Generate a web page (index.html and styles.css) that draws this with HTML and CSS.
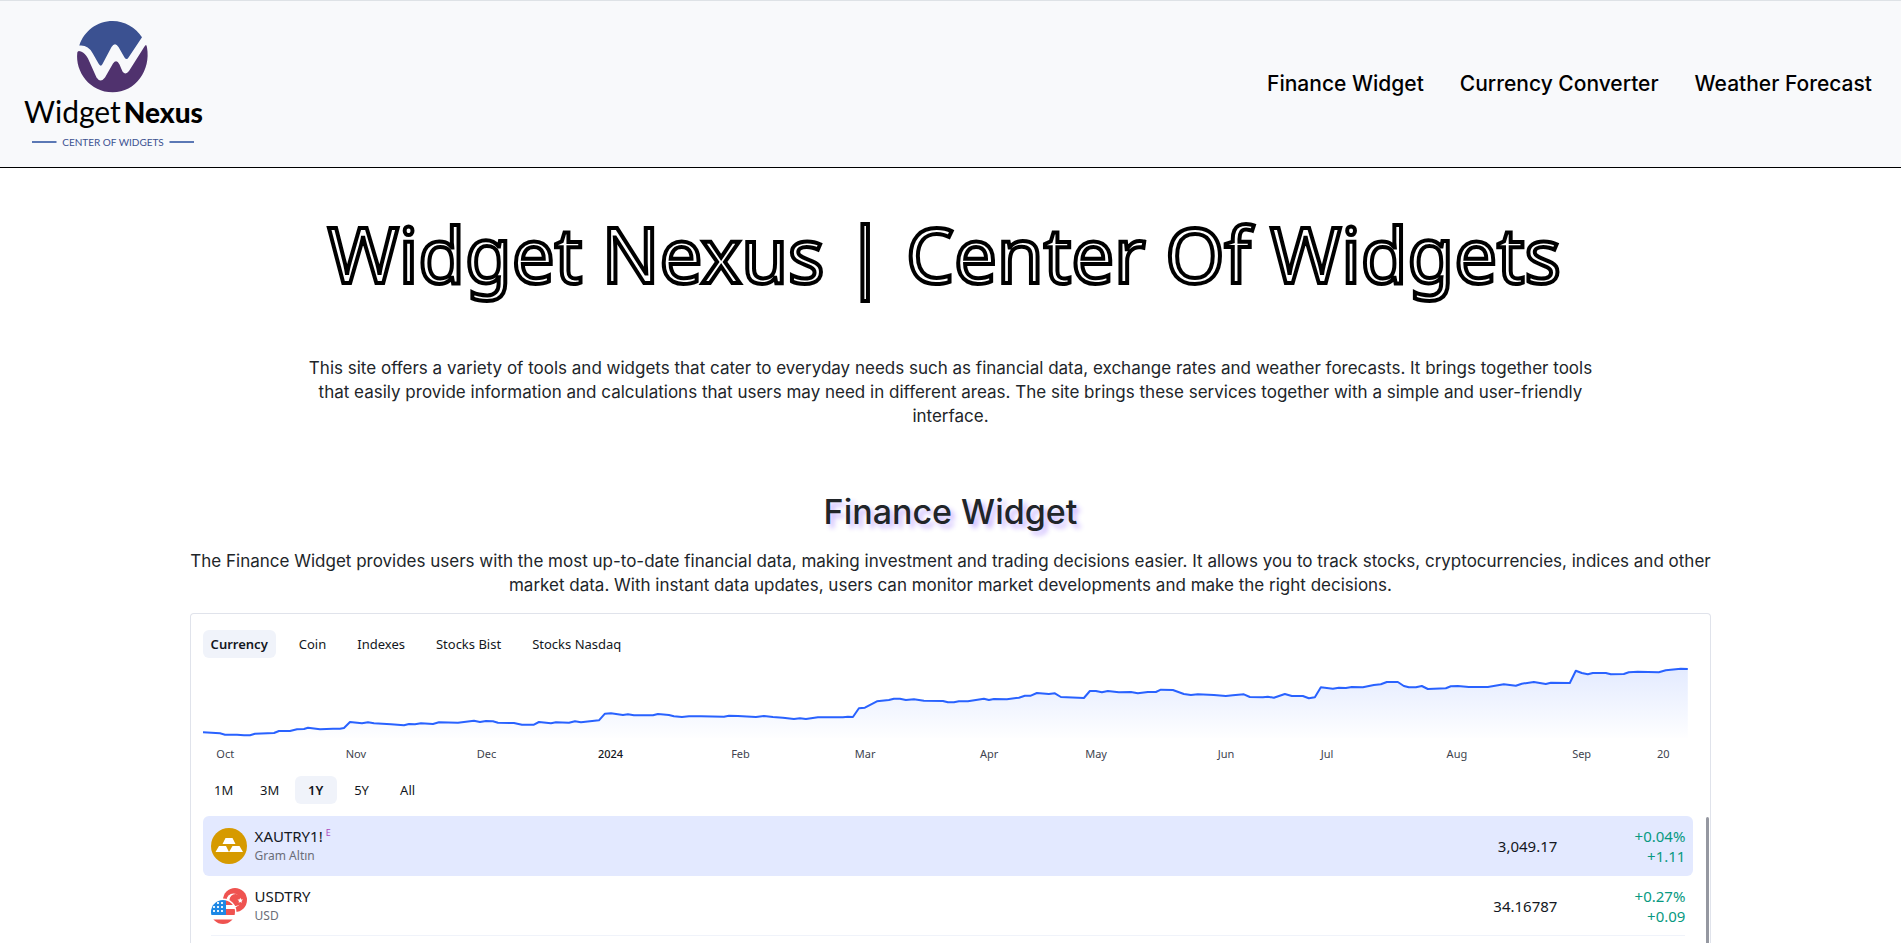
FILE: index.html
```html
<!DOCTYPE html>
<html lang="en">
<head>
<meta charset="utf-8">
<meta name="viewport" content="width=device-width, initial-scale=1">
<title>Widget Nexus | Center Of Widgets</title>
<link rel="stylesheet" href="styles.css">
</head>
<body>
<header class="header">
  <a class="logo" href="#">
    <svg width="184" height="136" viewBox="20 16 184 136" role="img" aria-label="WidgetNexus, Center of Widgets">
      <path fill="#3b5191" d="M79.3 45.5C84 31 97 21 112.7 21C124.500 21 135.500 27.500 142 37.300L128.500 57.500Q126.700 60.500 124.500 57.500L118.500 47Q115 41.500 111.500 47L102.500 64Q100.700 67.500 98.500 63.500L92.500 53Q88 44.500 79.300 45.500Z"/>
      <path fill="#50326e" d="M77.300 52.500Q77.800 50 81 51.500Q85 53 88 58.500L96.500 77.500Q100.500 83.500 105 77.500L113 63.500Q116.500 58.500 119.500 64.500L122.500 71.500Q125.700 75.500 129 71L144.500 46.500Q146.500 43 147 47.500C151 70 136 92.300 112.700 92.300C90 92.300 75 72 77.300 52.500Z"/>
      <text class="logo-light" x="24" y="123">Widget</text>
      <text class="logo-black" x="203" y="123" text-anchor="end">Nexus</text>
      <path stroke="#5b78b5" stroke-width="2" d="M32 142H56.500M169.500 142H194"/>
      <text class="logo-tag" x="113" y="146" text-anchor="middle">CENTER OF WIDGETS</text>
    </svg>
  </a>
  <nav class="nav">
    <a href="#finance">Finance Widget</a>
    <a href="#currency">Currency Converter</a>
    <a href="#weather">Weather Forecast</a>
  </nav>
</header>

<main class="main">
  <section class="intro">
    <h1 class="title">Widget Nexus | Center Of Widgets</h1>
    <p class="text">This site offers a variety of tools and widgets that cater to everyday needs such as financial data, exchange rates and weather forecasts. It brings together tools that easily provide information and calculations that users may need in different areas. The site brings these services together with a simple and user-friendly interface.</p>
  </section>

  <section class="finance" id="finance">
    <h2 class="subtitle">Finance Widget</h2>
    <p class="text">The Finance Widget provides users with the most up-to-date financial data, making investment and trading decisions easier. It allows you to track stocks, cryptocurrencies, indices and other market data. With instant data updates, users can monitor market developments and make the right decisions.</p>

    <div class="widget">
      <div class="tabs">
        <button class="chip active" type="button">Currency</button>
        <button class="chip" type="button">Coin</button>
        <button class="chip" type="button">Indexes</button>
        <button class="chip" type="button">Stocks Bist</button>
        <button class="chip" type="button">Stocks Nasdaq</button>
      </div>

      <div class="chart">
        <svg class="plot" viewBox="0 0 1485 78" preserveAspectRatio="none" aria-hidden="true">
          <defs>
            <linearGradient id="fill" gradientUnits="userSpaceOnUse" x1="0" y1="9" x2="0" y2="78">
              <stop offset="0" stop-color="#2962ff" stop-opacity=".13"/>
              <stop offset="1" stop-color="#2962ff" stop-opacity=".005"/>
            </linearGradient>
            <path id="line" d="M0 72.300L17 73.300 22 74.700 34 74.700 41 75.300 47 75.300 52 73.700 71 73 76 71 87 71 94 69.300 101 69 105 67.700 117 69.300 130 68.700 137 68.700 141 68 147 62 159 63.300 165 62.300 171 63.300 188 64.300 201 65.300 206 64 212 64.300 218 63.300 230 64 236 62.300 255 62.700 271 60.700 277 62 283 61 290 61.300 295 62.700 311 63 319 64.700 331 64.700 336 62 348 63.300 353 62.300 366 62.700 372 61.300 378 62.300 396 60.300 402 53.700 408 53.300 420 55 425 54.300 431 55.300 450 55.300 455 54 466 55 471 56.300 479 57 486 56.300 498 56.300 521 56.700 526 55.700 535 56 553 57 561 56 570 57 580 57.700 591 59 597 58.300 603 59 615 57.300 640 57.300 645 56.700 650 57 656 48.300 662 47.700 674 41.300 686 40 691 38.700 697 38.700 703 40 711 39.300 721 40.700 740 41 745 42.300 751 42.300 756 41.300 765 41.300 781 38.700 786 40 791 39 804 39.300 816 37.700 822 35.700 828 35.700 834 33 846 34 852 33.300 858 37 881 38 887 31 893 31 899 32.300 905 31 916 32.300 928 32 935 33.300 945 32 953 32 958 29.700 970 30 981 34 988 35 995 34.300 1011 35 1023 36 1030 35.300 1041 34.300 1047 37 1060 37.300 1065 36.700 1071 37.700 1082 34 1089 36 1100 36 1106 38.300 1112 37.300 1118 27.300 1130 28.700 1136 27.700 1143 28 1149 27 1160 27.300 1171 25 1178 24.300 1184 22 1195 22 1201 26 1206 27.300 1213 27.300 1219 26 1225 29 1243 28.300 1248 26.300 1255 26 1266 27 1285 27 1301 24.300 1313 25.700 1319 23.700 1331 22 1343 24 1348 22.700 1367 23 1373 10.700 1379 13 1385 14.300 1390 13 1403 13 1408 14.300 1421 14 1426 12.300 1435 11.700 1456 12.300 1463 10.300 1478 8.700 1485 9"/>
          </defs>
          <path fill="url(#fill)" d="M0 72.300L17 73.300 22 74.700 34 74.700 41 75.300 47 75.300 52 73.700 71 73 76 71 87 71 94 69.300 101 69 105 67.700 117 69.300 130 68.700 137 68.700 141 68 147 62 159 63.300 165 62.300 171 63.300 188 64.300 201 65.300 206 64 230 64 236 62.300 255 62.700 271 60.700 295 62.700 311 63 319 64.700 331 64.700 336 62 348 63.300 378 62.300 396 60.300 402 53.700 408 53.300 431 55.300 450 55.300 479 57 498 56.300 535 56 570 57 591 59 603 59 615 57.300 650 57 656 48.300 662 47.700 674 41.300 691 38.700 697 38.700 721 40.700 740 41 751 42.300 765 41.300 781 38.700 804 39.300 816 37.700 834 33 852 33.300 858 37 881 38 887 31 893 31 935 33.300 953 32 958 29.700 970 30 981 34 988 35 1023 36 1041 34.300 1047 37 1071 37.700 1082 34 1089 36 1100 36 1106 38.300 1112 37.300 1118 27.300 1130 28.700 1160 27.300 1184 22 1195 22 1201 26 1213 27.300 1219 26 1225 29 1243 28.300 1255 26 1285 27 1301 24.300 1313 25.700 1331 22 1343 24 1367 23 1373 10.700 1385 14.300 1403 13 1421 14 1435 11.700 1456 12.300 1478 8.700 1485 9V78H0Z"/>
          <use class="line" href="#line"/>
        </svg>
        <svg class="months" width="100%" height="20" aria-hidden="true">
          <text x="1.5%" y="14">Oct</text>
          <text x="10.300%" y="14">Nov</text>
          <text x="19.100%" y="14">Dec</text>
          <text class="year" x="27.450%" y="14">2024</text>
          <text x="36.200%" y="14">Feb</text>
          <text x="44.600%" y="14">Mar</text>
          <text x="52.950%" y="14">Apr</text>
          <text x="60.150%" y="14">May</text>
          <text x="68.900%" y="14">Jun</text>
          <text x="75.700%" y="14">Jul</text>
          <text x="84.450%" y="14">Aug</text>
          <text x="92.850%" y="14">Sep</text>
          <text x="98.350%" y="14">20</text>
        </svg>
      </div>

      <div class="ranges">
        <button class="chip" type="button">1M</button>
        <button class="chip" type="button">3M</button>
        <button class="chip active" type="button">1Y</button>
        <button class="chip" type="button">5Y</button>
        <button class="chip" type="button">All</button>
      </div>

      <div class="list">
        <div class="rows">
          <a class="row selected" href="#">
            <svg class="icon" width="36" height="36" viewBox="0 0 36 36" aria-hidden="true">
              <circle cx="18" cy="18" r="18" fill="#d69a00"/>
              <path fill="#fff" d="M14.500 10h7l3 6h-13zM8 18h7l3 6H4.500zM21.500 18h7l3.500 6H18z"/>
            </svg>
            <span class="names"><span class="symbol">XAUTRY1!<sup>E</sup></span><span class="desc">Gram Altın</span></span>
            <span class="price">3,049.17</span>
            <span class="change"><span>+0.04%</span><span>+1.11</span></span>
          </a>
          <a class="row" href="#">
            <svg class="icon" width="36" height="36" viewBox="0 0 36 36" aria-hidden="true">
              <defs><clipPath id="us"><circle cx="12" cy="24" r="12"/></clipPath></defs>
              <circle cx="24" cy="12" r="12" fill="#ef5350"/>
              <circle cx="22.500" cy="12.500" r="7" fill="#fff"/>
              <circle cx="24.500" cy="12" r="6" fill="#ef5350"/>
              <path fill="#fff" d="M29.300 9.800l.8 1.600 1.900.2-1.400 1.300.3 1.900-1.600-.9-1.700.9.400-1.900-1.500-1.300 1.900-.2z"/>
              <circle cx="12" cy="24" r="13.500" fill="#fff"/>
              <g clip-path="url(#us)">
                <path fill="#fff" d="M0 12h24v24H0z"/>
                <path fill="#ef5350" d="M15 12h9v5h-9zM15 21h9v6h-9zM0 31.500h24V36H0z"/>
                <path fill="#1e88e5" d="M0 12h15v15H0z"/>
                <path stroke="#e3f2fd" stroke-width="2" stroke-dasharray="2 2" d="M2 15h11M2 19h11M2 23h11"/>
              </g>
            </svg>
            <span class="names"><span class="symbol">USDTRY</span><span class="desc">USD</span></span>
            <span class="price">34.16787</span>
            <span class="change"><span>+0.27%</span><span>+0.09</span></span>
          </a>
        </div>
        <div class="scrollbar"></div>
      </div>
    </div>
  </section>
</main>
</body>
</html>
```
FILE: styles.css
```css
* { box-sizing: border-box; }

body {
  display: flex;
  flex-direction: column;
  min-height: 100vh;
  margin: 0;
  background: #fff;
  color: #212529;
  font: 17px/24px Inter, "Open Sans", sans-serif;
}

h1, h2, p { margin: 0; }
a { color: inherit; text-decoration: none; }

.header {
  display: flex;
  align-items: center;
  justify-content: space-between;
  padding: 15px 29px 15px 20px;
  border-top: 1px solid #dee2e6;
  border-bottom: 1px solid #000;
  background: #f8f9fb;
}

.logo svg { display: block; }
.logo-light { font: 400 30px Lato, sans-serif; }
.logo-black { font: 900 28px Lato, sans-serif; }
.logo-tag { font: 400 10px Lato, sans-serif; fill: #3b5191; }

.nav {
  display: flex;
  gap: 36px;
  color: #000;
  font-size: 21px;
  font-weight: 500;
}

.main {
  display: flex;
  flex: 1;
  flex-direction: column;
  text-align: center;
}

.intro {
  width: 100%;
  max-width: 1320px;
  margin: 0 auto;
  padding: 32px 12px 64px;
}

.title {
  margin-bottom: 48px;
  padding-right: 12px;
  color: #fff;
  font: 400 76px/108px "Noto Sans", sans-serif;
  -webkit-text-stroke: 4px #000;
}

.finance {
  display: flex;
  flex: 1;
  flex-direction: column;
  width: calc(80% + 1px);
  margin: 0 auto;
}

.subtitle {
  margin-bottom: 17px;
  font-size: 34px;
  font-weight: 500;
  line-height: 40px;
  text-shadow: 4px 4px 5px #5a1eff50;
}

.widget {
  display: flex;
  flex: 1;
  flex-direction: column;
  margin-top: 16px;
  padding: 16px 0 0 12px;
  border: 1px solid #e0e3eb;
  border-bottom: 0;
  border-radius: 4px 4px 0 0;
  color: #131722;
  font-family: "Noto Sans", sans-serif;
  text-align: left;
}

.tabs { display: flex; gap: 15px; }
.ranges { display: flex; gap: 4px; margin: 12px 0; }

.chip {
  min-width: 42px;
  padding: 0 8px;
  border: 0;
  border-radius: 6px;
  background: none;
  color: inherit;
  font: 400 13px/28px "Noto Sans", sans-serif;
}

.chip.active { background: #f0f3fa; font-weight: 600; }

.chart { margin: 2px 23px 0 0; }
.plot { display: block; width: 100%; height: 78px; overflow: visible; }

.line {
  fill: none;
  stroke: #2962ff;
  stroke-width: 2px;
  stroke-linejoin: round;
  vector-effect: non-scaling-stroke;
}

.months {
  display: block;
  margin-top: 6px;
  fill: #40434e;
  font-size: 11px;
  text-anchor: middle;
}

.year { fill: #131722; font-weight: 500; }

.list { display: flex; flex: 1; justify-content: space-between; }
.rows { flex: 1; }

.row {
  display: flex;
  align-items: center;
  margin-right: 13px;
  padding: 10px 8px;
  border-radius: 6px;
  background: linear-gradient(#f0f3fa, #f0f3fa) 8px 100% / calc(100% - 16px) 1px no-repeat;
  font-size: 15px;
  line-height: 20px;
}

.row.selected { background: #e3e9ff; }
.names { display: flex; flex: 1; flex-direction: column; margin-left: 8px; }
.symbol sup { margin-left: 3px; color: #ab47bc; font-size: 9px; line-height: 0; }
.desc { color: #6a6d78; font-size: 12px; }
.change { width: 128px; color: #089981; text-align: right; }
.change span { display: block; }

.scrollbar {
  width: 3px;
  margin: 1px 1px 0 0;
  border-radius: 2px 2px 0 0;
  background: #9598a1;
}
```
